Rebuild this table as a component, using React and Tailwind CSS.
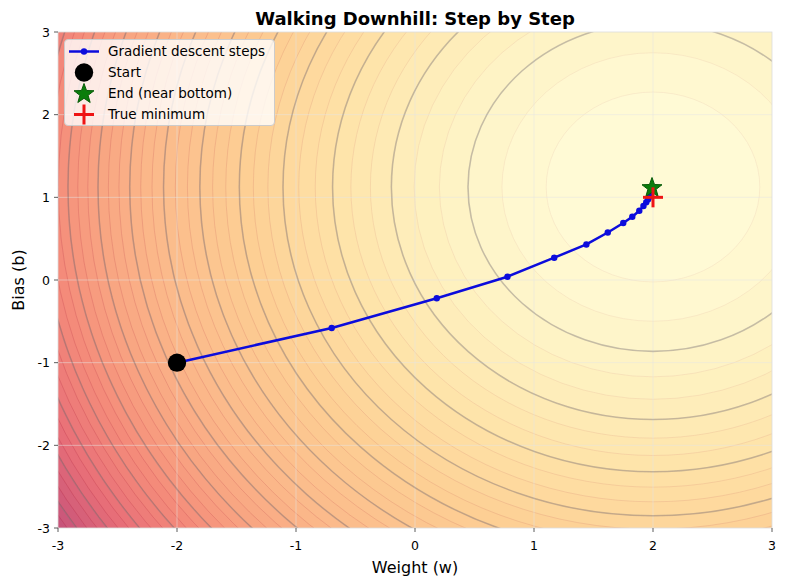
import React from "react";

// plot geometry (page coords of the axes box: x 58..772, y 32..528)
const PW = 714;
const PH = 496;
const SX = PW / 6;
const SY = PH / 6;
const px = (w) => (w + 3) * SX;
const py = (b) => (3 - b) * SY;

// loss surface, fitted in plot-local pixels
const CX = 595;
const CY = 155;
const RX1 = 185;
const RY1 = 164.4;
const LMAX = 58.5;
const BAND = 4 / 3;

const FILL = [
  [0, "#fffbd8"],
  [0.1, "#fef1c0"],
  [0.2, "#fee3a8"],
  [0.33, "#fdcf94"],
  [0.5, "#fbb98a"],
  [0.62, "#f8a381"],
  [0.72, "#f48b7a"],
  [0.85, "#e86f78"],
  [1, "#c5527a"],
];

const toRgb = (h) => [1, 3, 5].map((i) => parseInt(h.slice(i, i + 2), 16));
const mix = (a, b, t) => a.map((v, i) => Math.round(v + (b[i] - v) * t));
const rgb = (c) => `rgb(${c.join(",")})`;

function cmap(t) {
  const x = Math.min(1, Math.max(0, t));
  for (let i = 1; i < FILL.length; i++) {
    const [t1, c1] = FILL[i];
    const [t0, c0] = FILL[i - 1];
    if (x <= t1) return mix(toRgb(c0), toRgb(c1), (x - t0) / (t1 - t0));
  }
  return toRgb(FILL[FILL.length - 1][1]);
}

const radii = (L) => [RX1 * Math.sqrt(L / 4), RY1 * Math.sqrt(L / 4)];

// gradient descent path (w, b)
const steps = [
  [-2, -1],
  [-0.7, -0.58],
  [0.183, -0.22],
  [0.777, 0.04],
  [1.17, 0.27],
  [1.44, 0.43],
  [1.62, 0.575],
  [1.75, 0.69],
  [1.826, 0.766],
  [1.885, 0.838],
];
{
  let dw = 1.992 - 1.885;
  let db = 1.113 - 0.838;
  for (let i = 0; i < 20; i++) {
    dw *= 0.674;
    db *= 0.79;
    steps.push([1.992 - dw, 1.113 - db]);
  }
}

function starPoints(cx, cy, R, r) {
  const pts = [];
  for (let i = 0; i < 10; i++) {
    const a = -Math.PI / 2 + (i * Math.PI) / 5;
    const rad = i % 2 === 0 ? R : r;
    pts.push(`${(cx + rad * Math.cos(a)).toFixed(2)},${(cy + rad * Math.sin(a)).toFixed(2)}`);
  }
  return pts.join(" ");
}

const BLUE = "#0c0cdc";
const GREEN = "#0b7d0b";
const RED = "#ee1414";
const ticks = [-3, -2, -1, 0, 1, 2, 3];

function Plot() {
  const bandCount = Math.ceil(60 / BAND);
  const bands = [];
  for (let k = bandCount; k >= 1; k--) {
    const L = k * BAND;
    const [rx, ry] = radii(L);
    const t = (L - BAND / 2) / LMAX;
    const fill = cmap(t);
    const seam = mix(fill, [160, 16, 48], 0.15 + 0.45 * Math.min(1, t));
    bands.push(
      <ellipse key={k} cx={CX} cy={CY} rx={rx} ry={ry} fill={rgb(fill)} stroke={rgb(seam)} strokeOpacity={0.55} strokeWidth={0.7} />
    );
  }
  const lines = [];
  for (let k = 1; k <= 15; k++) {
    const [rx, ry] = radii(4 * k);
    lines.push(
      <ellipse key={k} cx={CX} cy={CY} rx={rx} ry={ry} fill="none" stroke="#7a7a7a" strokeOpacity={0.4} strokeWidth={1.6} />
    );
  }
  const path = steps.map(([w, b]) => `${px(w).toFixed(2)},${py(b).toFixed(2)}`).join(" ");

  return (
    <svg width="748" height="522" viewBox="0 0 748 522" className="block overflow-visible">
      <defs>
        <clipPath id="axes">
          <rect x="0" y="0" width={PW} height={PH} />
        </clipPath>
      </defs>
      <g transform="translate(20,0)">
        <g clipPath="url(#axes)">
          <rect x="0" y="0" width={PW} height={PH} fill={rgb(cmap((bandCount * BAND + BAND / 2) / LMAX))} />
          {bands}
          {ticks.slice(1, -1).map((v) => (
            <g key={v}>
              <line x1={px(v)} x2={px(v)} y1="0" y2={PH} stroke="#e6e6e6" strokeOpacity="0.5" strokeWidth="1" />
              <line x1="0" x2={PW} y1={py(v)} y2={py(v)} stroke="#e6e6e6" strokeOpacity="0.5" strokeWidth="1" />
            </g>
          ))}
          {lines}
          <polyline points={path} fill="none" stroke={BLUE} strokeWidth="2.5" strokeLinejoin="round" />
          {steps.map(([w, b], i) => (
            <circle key={i} cx={px(w)} cy={py(b)} r="3.2" fill={BLUE} />
          ))}
          <circle cx={px(-2)} cy={py(-1)} r="9.2" fill="#000" />
          <polygon points={starPoints(594, 156, 10.5, 4.3)} fill={GREEN} stroke="#075a07" strokeWidth="1" />
          <line x1={px(2) - 10} x2={px(2) + 10} y1={py(1)} y2={py(1)} stroke={RED} strokeWidth="3" />
          <line x1={px(2)} x2={px(2)} y1={py(1) - 10} y2={py(1) + 10} stroke={RED} strokeWidth="3" />
        </g>
        <rect x="0" y="0" width={PW} height={PH} fill="none" stroke="#dcdcdc" strokeWidth="0.8" />
        {ticks.map((v) => (
          <g key={v} fill="#000" fontFamily="'DejaVu Sans', sans-serif" fontSize="12.5">
            <line x1={px(v)} x2={px(v)} y1={PH} y2={PH + 4} stroke="#333" strokeWidth="0.8" />
            <text x={px(v)} y={518} textAnchor="middle">
              {v < 0 ? `-${-v}` : v}
            </text>
            <line x1="-4" x2="0" y1={py(v)} y2={py(v)} stroke="#333" strokeWidth="0.8" />
            <text x="-8" y={py(v) + 4.5} textAnchor="end">
              {v < 0 ? `-${-v}` : v}
            </text>
          </g>
        ))}
      </g>
    </svg>
  );
}

function Handle({ children }) {
  return (
    <svg width="30" height="21" viewBox="0 0 30 21" className="block shrink-0">
      {children}
    </svg>
  );
}

function Legend() {
  const items = [
    {
      label: "Gradient descent steps",
      icon: (
        <>
          <line x1="0" x2="30" y1="10.5" y2="10.5" stroke={BLUE} strokeWidth="2.5" />
          <circle cx="15" cy="10.5" r="3.2" fill={BLUE} />
        </>
      ),
    },
    { label: "Start", icon: <circle cx="15" cy="10.5" r="9.2" fill="#000" /> },
    {
      label: "End (near bottom)",
      icon: <polygon points={starPoints(15, 11, 10.5, 4.3)} fill={GREEN} stroke="#075a07" strokeWidth="1" />,
    },
    {
      label: "True minimum",
      icon: (
        <>
          <line x1="5" x2="25" y1="10.5" y2="10.5" stroke={RED} strokeWidth="3" />
          <line x1="15" x2="15" y1="0.5" y2="20.5" stroke={RED} strokeWidth="3" />
        </>
      ),
    },
  ];
  return (
    <div className="absolute left-[26px] top-[7px] w-[211px] rounded-[4px] border border-[#cccccc] bg-white/80 py-[0.5px] pl-[4px]">
      {items.map((it) => (
        <div key={it.label} className="flex h-[21px] items-center">
          <Handle>{it.icon}</Handle>
          <span className="ml-[9px] whitespace-nowrap text-[13.5px] leading-[21px] text-black">{it.label}</span>
        </div>
      ))}
    </div>
  );
}

export default function App() {
  return (
    <div className="flex h-[586px] w-[786px] flex-col overflow-hidden bg-white font-['DejaVu_Sans',sans-serif] text-black">
      <div className="h-[32px] shrink-0 pl-[58px] pr-[14px] pt-[10px] text-center text-[18px] font-bold leading-[18px]">
        Walking Downhill: Step by Step
      </div>
      <div className="flex h-[522px] shrink-0">
        <div className="flex h-[496px] w-[38px] shrink-0 items-center justify-center">
          <span className="-rotate-90 whitespace-nowrap text-[16px] leading-[16px]">Bias (b)</span>
        </div>
        <div className="relative">
          <Plot />
          <Legend />
        </div>
      </div>
      <div className="pl-[58px] pr-[14px] pt-[5.5px] text-center text-[16px] leading-[16px]">Weight (w)</div>
    </div>
  );
}
